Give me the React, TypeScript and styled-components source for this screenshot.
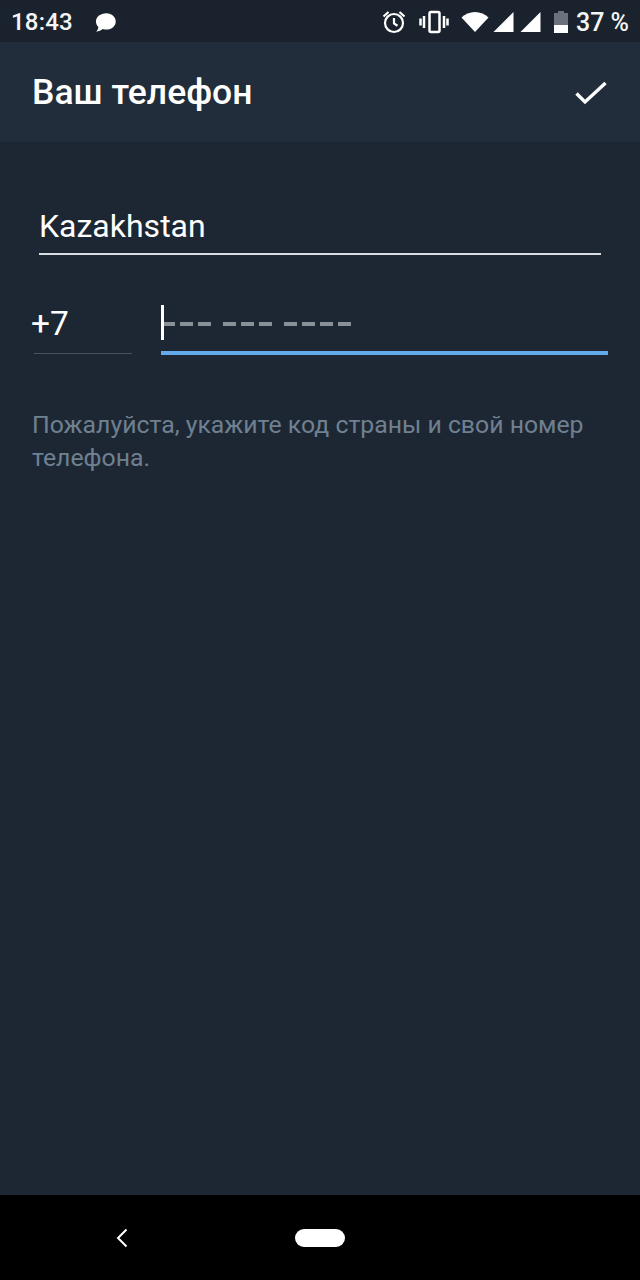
import React from 'react'
import styled, { createGlobalStyle } from 'styled-components'

const colors = {
  statusBar: '#1a232d',
  toolbar: '#212d3b',
  page: '#1d2733',
  hint: '#6f8091',
  accent: '#64a9e9',
}

// the phone mask: digits per group, drawn as dashes like the app does
const phoneMask = [3, 3, 4]

export default function App() {
  return (
    <Screen>
      <GlobalStyle />
      <StatusBar>
        <StatusGroup>
          <Clock>18:43</Clock>
          <svg width="22" height="19" viewBox="3.500 3 18.500 17.500">
            <path
              fill="#fff"
              d="M13 3.200c-5.200 0-9.500 3.300-9.500 7.600 0 1.900.8 3.600 2.200 5-.1 1.800-1 3.200-2 4.400 2.300-.2 4.500-1 6-2.400 1 .3 2.100.5 3.300.5 5.200 0 8.700-3.300 8.700-7.500S18.200 3.200 13 3.200z"
            />
          </svg>
        </StatusGroup>
        <StatusGroup>
          <StatusIcon $gap={0} width="26" height="26" viewBox="0 0 26 26" fill="none" stroke="#fff" strokeWidth="2.200">
            <circle cx="13" cy="14" r="9" />
            <path d="M13 9v5.500l3.500 2.200M2.500 7.500 7.500 3M23.500 7.500 18.500 3" />
          </StatusIcon>
          <StatusIcon $gap={12} width="30" height="26" viewBox="0 0 30 26" fill="none" stroke="#fff" strokeWidth="2.500">
            <rect x="10.500" y="3" width="10" height="20" rx="1.500" />
            <path d="M5 7v12M25 7v12M1.500 9.500v7M28.500 9.500v7" />
          </StatusIcon>
          <StatusIcon $gap={12} width="28" height="22" viewBox="0 0 28 22">
            <path fill="#fff" d="M0.500 6.500C4 3.200 8.800 1 14 1s10 2.200 13.500 5.500L14 21z" />
          </StatusIcon>
          <StatusIcon $gap={4} width="21" height="22" viewBox="0 0 21 22">
            <path fill="#fff" d="M0.500 21 20.500 1v20z" />
          </StatusIcon>
          <StatusIcon $gap={6} width="21" height="22" viewBox="0 0 21 22">
            <path fill="#fff" d="M0.500 21 20.500 1v20z" />
          </StatusIcon>
          <StatusIcon $gap={13} width="14" height="22" viewBox="0 0 14 22">
            <path fill="#6a737d" d="M4 0h6v2h4v20H0V2h4z" />
            <path fill="#fff" d="M0 14h14v8H0z" />
          </StatusIcon>
          <Percent>37 %</Percent>
        </StatusGroup>
      </StatusBar>

      <Toolbar>
        <Title>Ваш телефон</Title>
        <svg width="36" height="36" viewBox="0 0 36 36" fill="none" stroke="#fff" strokeWidth="3.400">
          <path d="M3.500 19.500 12 28 32.500 9" />
        </svg>
      </Toolbar>

      <Content>
        <CountryField>Kazakhstan</CountryField>
        <PhoneRow>
          <CodeField>+7</CodeField>
          <NumberField>
            <Caret />
            {phoneMask.map((count, group) => (
              <DashGroup key={group}>
                {Array.from({ length: count }, (_, i) => (
                  <Dash key={i} />
                ))}
              </DashGroup>
            ))}
          </NumberField>
        </PhoneRow>
        <Hint>Пожалуйста, укажите код страны и свой номер телефона.</Hint>
      </Content>

      <NavBar>
        <svg width="14" height="20" viewBox="0 0 14 20" fill="none" stroke="#fff" strokeWidth="2">
          <path d="M11.500 1.500 3 10l8.500 8.500" />
        </svg>
        <HomePill />
      </NavBar>
    </Screen>
  )
}

const GlobalStyle = createGlobalStyle`
  html, body {
    margin: 0;
    padding: 0;
    background: #1d2733;
  }
  * {
    box-sizing: border-box;
  }
`

const Screen = styled.div`
  width: 640px;
  height: 1280px;
  display: flex;
  flex-direction: column;
  overflow: hidden;
  background: ${colors.page};
  color: #fff;
  font-family: Roboto, 'Liberation Sans', sans-serif;
`

const StatusBar = styled.div`
  height: 42px;
  flex: none;
  display: flex;
  align-items: center;
  justify-content: space-between;
  padding: 2px 11px 0 11px;
  background: ${colors.statusBar};
`

const StatusGroup = styled.div`
  display: flex;
  align-items: center;
`

const StatusIcon = styled.svg<{ $gap: number }>`
  margin-left: ${(p) => p.$gap}px;
`

const Clock = styled.span`
  font-size: 24px;
  font-weight: 500;
  letter-spacing: 0.2px;
  margin-right: 22px;
  color: #f4f5f6;
`

const Percent = styled.span`
  font-size: 25px;
  font-weight: 500;
  margin-left: 8px;
  color: #f4f5f6;
`

const Toolbar = styled.div`
  height: 100px;
  flex: none;
  display: flex;
  align-items: center;
  justify-content: space-between;
  padding: 0 31px 0 32px;
  background: ${colors.toolbar};
`

const Title = styled.div`
  font-size: 35.500px;
  font-weight: 500;
`

const Content = styled.div`
  flex: 1;
  padding: 63px 32px 0 33px;
`

const CountryField = styled.div`
  margin: 0 7px 0 6px;
  height: 50px;
  font-size: 32px;
  line-height: 42px;
  border-bottom: 2px solid #d9dde1;
`

const PhoneRow = styled.div`
  display: flex;
  align-items: flex-start;
  gap: 29px;
  margin-top: 49px;
`

const CodeField = styled.div`
  width: 98px;
  margin-left: 1px;
  height: 50px;
  font-size: 33.500px;
  line-height: 40px;
  text-indent: -3px;
  border-bottom: 1px solid #465261;
`

const NumberField = styled.div`
  position: relative;
  flex: 1;
  height: 51px;
  display: flex;
  align-items: center;
  gap: 12px;
  padding: 0 0 7px 1px;
  border-bottom: 4px solid ${colors.accent};
`

const Caret = styled.div`
  position: absolute;
  left: 0;
  top: 1px;
  width: 3px;
  height: 35px;
  background: #fff;
`

const DashGroup = styled.div`
  display: flex;
  gap: 5px;
`

const Dash = styled.div`
  width: 13px;
  height: 4px;
  background: #8a9097;
`

const Hint = styled.p`
  margin: 53px 0 0 -1px;
  font-size: 24.800px;
  line-height: 33px;
  color: ${colors.hint};
`

const NavBar = styled.div`
  height: 85px;
  flex: none;
  display: flex;
  align-items: center;
  padding-left: 115px;
  background: #000;
`

const HomePill = styled.div`
  width: 50px;
  height: 18px;
  border-radius: 9px;
  background: #fff;
  margin-left: 166px;
`
